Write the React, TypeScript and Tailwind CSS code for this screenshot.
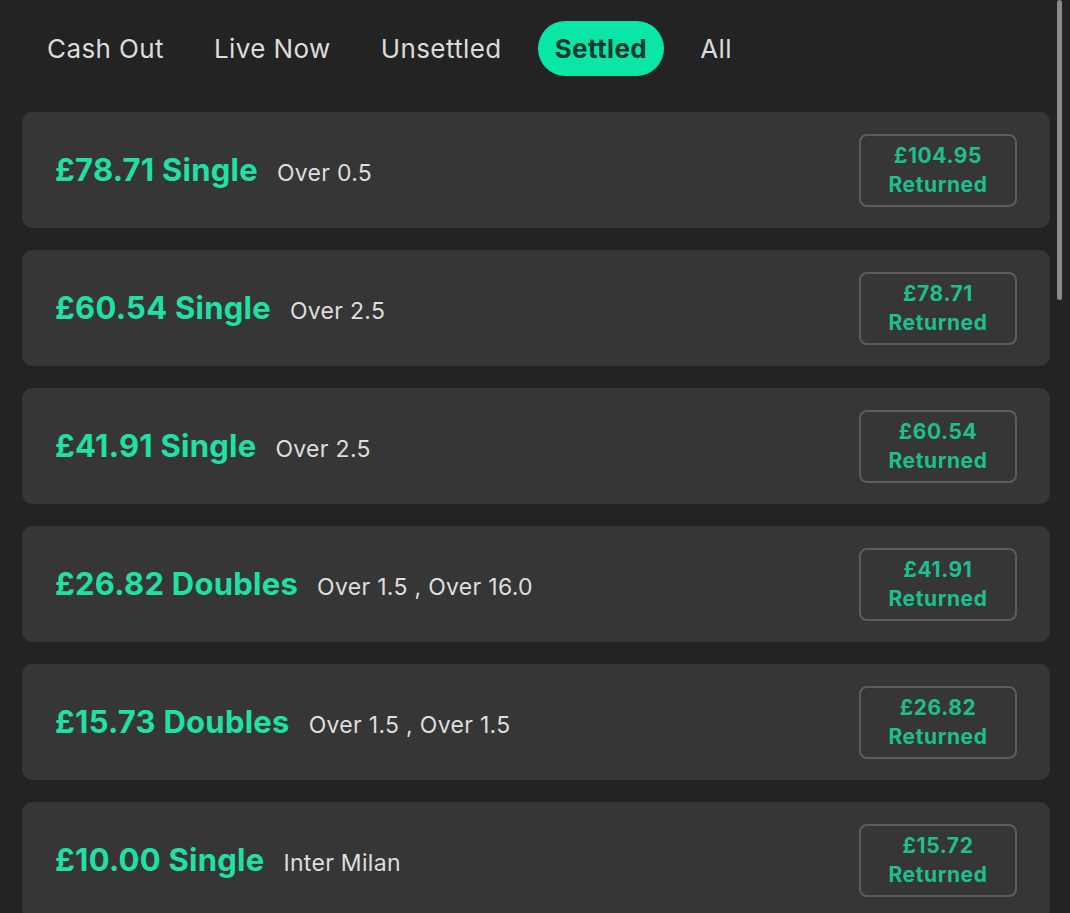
const TABS = ["Cash Out", "Live Now", "Unsettled", "Settled", "All"];

const BETS = [
  { stake: "£78.71", type: "Single", selection: "Over 0.5", returned: "£104.95" },
  { stake: "£60.54", type: "Single", selection: "Over 2.5", returned: "£78.71" },
  { stake: "£41.91", type: "Single", selection: "Over 2.5", returned: "£60.54" },
  { stake: "£26.82", type: "Doubles", selection: "Over 1.5 , Over 16.0", returned: "£41.91" },
  { stake: "£15.73", type: "Doubles", selection: "Over 1.5 , Over 1.5", returned: "£26.82" },
  { stake: "£10.00", type: "Single", selection: "Inter Milan", returned: "£15.72" },
];

export default function App() {
  return (
    <div
      className="relative h-[913px] w-[1070px] overflow-hidden bg-[#232323]"
      style={{ fontFamily: "Inter, Roboto, 'Liberation Sans', sans-serif" }}
    >
      {/* tabs */}
      <div className="flex items-center gap-[22px] pl-[33px] pt-[21px]">
        {TABS.map((tab) => {
          const active = tab === "Settled";
          return (
            <div
              key={tab}
              className={`flex h-[55px] items-center rounded-full text-[26px] tracking-[0.4px] ${
                active ? "bg-[#0ae6a6] px-[17px] font-bold text-[#153a2e]" : "px-[14px] text-[#dcdcdc]"
              }`}
            >
              {tab}
            </div>
          );
        })}
      </div>

      {/* bets */}
      <div className="mt-[36px] flex flex-col gap-[22px] pl-[22px] pr-[20px]">
        {BETS.map((bet) => (
          <div
            key={bet.stake}
            className="flex h-[116px] items-center justify-between rounded-[10px] bg-[#363636] pl-[33px] pr-[33px]"
          >
            <div className="flex items-baseline gap-[19px]">
              <span className="text-[31px] font-bold tracking-[0.25px] text-[#1fe0a5]">
                {bet.stake} {bet.type}
              </span>
              <span className="text-[23px] tracking-[0.3px] text-[#dedede]">{bet.selection}</span>
            </div>
            <div className="flex h-[73px] w-[158px] flex-col items-center justify-center rounded-[8px] border-2 border-[#5c5c5c] text-[21px] font-bold leading-[29px] tracking-[0.6px] text-[#1dbf8e]">
              <span>{bet.returned}</span>
              <span>Returned</span>
            </div>
          </div>
        ))}
      </div>

      {/* overlay scrollbar */}
      <div className="absolute right-[8px] top-0 h-[300px] w-[5px] rounded-full bg-[#8a8a8a]" />
    </div>
  );
}
